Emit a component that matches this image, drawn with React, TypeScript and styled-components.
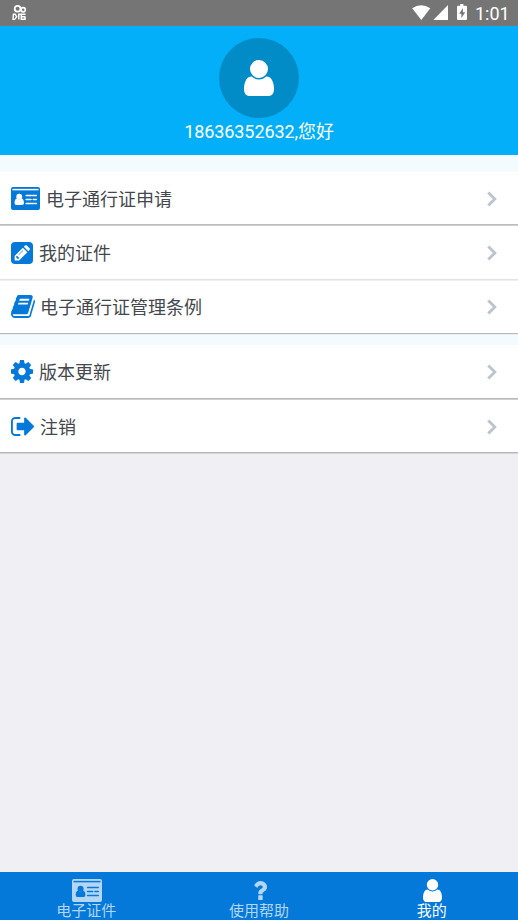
import React from "react";
import styled, { createGlobalStyle } from "styled-components";

const GlobalStyle = createGlobalStyle`
  * { box-sizing: border-box; }
  body { margin: 0; background: #efeff4; font-family: Roboto, "Noto Sans CJK SC", sans-serif; }
`;

const Screen = styled.div`
  display: flex;
  flex-direction: column;
  width: 518px;
  height: 920px;
  overflow: hidden;
  background: #efeff4;
`;

const StatusBar = styled.div`
  display: flex;
  flex: none;
  height: 26px;
  padding: 0 8px 0 12px;
  justify-content: space-between;
  background: #757575;
  color: #fff;
`;

const StatusIcons = styled.div`
  display: flex;
  align-items: flex-start;
`;

const Clock = styled.span`
  margin-left: 7px;
  width: 35px;
  font-size: 18px;
  line-height: 27px;
  white-space: nowrap;
`;

const Profile = styled.header`
  display: flex;
  flex: none;
  flex-direction: column;
  align-items: center;
  height: 129px;
  padding-top: 12px;
  background: #02aff8;
  color: #fff;
`;

const Avatar = styled.div`
  display: flex;
  justify-content: center;
  width: 80px;
  height: 80px;
  padding-top: 22px;
  border-radius: 50%;
  background: #028cc7;
`;

const Greeting = styled.div`
  font-size: 18px;
  line-height: 28px;
  letter-spacing: -0.08px;
  white-space: nowrap;
`;

const Band = styled.div<{ $h: number }>`
  flex: none;
  height: ${(p) => p.$h}px;
  background: #f3fbff;
`;

const Row = styled.div<{ $h: number; $lift: number; $line: string; $edge: string }>`
  display: flex;
  flex: none;
  align-items: center;
  height: ${(p) => p.$h}px;
  padding: 0 20px ${(p) => p.$lift}px 11px;
  background: #fff;
  color: #44484e;
  border-bottom: 1px solid ${(p) => p.$edge};
  box-shadow: inset 0 -1px 0 ${(p) => p.$line};
`;

const RowIcon = styled.span<{ $gap: number }>`
  display: flex;
  margin-right: ${(p) => p.$gap}px;
  color: #0479d9;
`;

const RowLabel = styled.span`
  flex: 1;
  padding-top: 2px;
  font-size: 18px;
  line-height: 26px;
`;

const Spacer = styled.div`
  flex: 1;
`;

const TabBar = styled.nav`
  display: grid;
  flex: none;
  grid-template-columns: repeat(3, 1fr);
  height: 48px;
  background: #0479d9;
`;

const Tab = styled.div<{ $active?: boolean }>`
  display: flex;
  flex-direction: column;
  align-items: center;
  padding-top: 7px;
  color: ${(p) => (p.$active ? "#fff" : "#b3d6f4")};
`;

const TabIcon = styled.span`
  display: flex;
  align-items: center;
  height: 23px;
  padding-left: 2px;
`;

const TabLabel = styled.span`
  font-size: 15px;
  line-height: 18px;
  white-space: nowrap;
`;

type GlyphProps = { d: string; box: string; w: number; h: number };
const Glyph = ({ d, box, w, h }: GlyphProps) => (
  <svg width={w} height={h} viewBox={box} preserveAspectRatio="none" fill="currentColor">
    <path d={d} />
  </svg>
);

const USER =
  "M1536 1399q0 109-62.5 187t-150.5 78h-854q-88 0-150.5-78t-62.5-187q0-85 8.5-160.5t31.5-152 58.5-131 94-89 134.5-34.5q131 128 313 128t313-128q76 0 134.5 34.5t94 89 58.5 131 31.5 152 8.5 160.5zm-256-887q0 159-112.5 271.5t-271.5 112.5-271.5-112.5-112.5-271.5 112.5-271.5 271.5-112.5 271.5 112.5 112.5 271.5z";
const BOOK =
  "M1703 478q40 57 18 129l-275 906q-19 64-76.5 107.5t-122.5 43.5h-923q-77 0-148.5-53.5t-99.5-131.5q-24-67-2-127 0-4 3-27t4-37q1-8-3-21.5t-3-19.5q2-11 8-21t16.5-23.5 16.5-23.5q23-38 45-91.5t30-91.5q3-10 .5-30t-.5-28q3-11 17-28t17-23q21-36 42-92t25-90q1-9-2.5-32t.5-28q4-13 22-30.5t22-22.5q19-26 42.5-84.5t27.5-96.5q1-8-3-25.5t-2-26.5q2-8 9-18t18-23 17-21q8-12 16.5-30.5t15-35 16-36 19.5-32 26.5-23.5 36-11.5 47.5 5.5l-1 3q38-9 51-9h761q74 0 114 56t18 130l-274 906q-36 119-71.5 153.5t-128.5 34.5h-869q-27 0-38 15-11 16-1 43 24 70 144 70h923q29 0 56-15.5t35-41.5l300-987q7-22 5-57 38 15 59 43zm-1064 2q-4 13 2 22.5t20 9.5h608q13 0 25.5-9.5t16.5-22.5l21-64q4-13-2-22.5t-20-9.5h-608q-13 0-25.5 9.5t-16.5 22.5zm-83 256q-4 13 2 22.5t20 9.5h608q13 0 25.5-9.5t16.5-22.5l21-64q4-13-2-22.5t-20-9.5h-608q-13 0-25.5 9.5t-16.5 22.5z";
const COG =
  "M1152 896q0-106-75-181t-181-75-181 75-75 181 75 181 181 75 181-75 75-181zm512-109v222q0 12-8 23t-20 13l-185 28q-19 54-39 91 35 50 107 138 10 12 10 25t-9 23q-27 37-99 108t-94 71q-12 0-26-9l-138-108q-44 23-91 38-16 136-29 186-7 28-36 28h-222q-14 0-24.5-8.5t-11.5-21.5l-28-184q-49-16-90-37l-141 107q-10 9-25 9-14 0-25-11-126-114-165-168-7-10-7-23 0-12 8-23 15-21 51-66.5t54-70.5q-27-50-41-99l-183-27q-13-2-21-12.5t-8-23.5v-222q0-12 8-23t19-13l186-28q14-46 39-92-40-57-107-138-10-12-10-24 0-10 9-23 26-36 98.5-107.5t94.5-71.5q13 0 26 10l138 107q44-23 91-38 16-136 29-186 7-28 36-28h222q14 0 24.5 8.5t11.5 21.5l28 184q49 16 90 37l142-107q9-9 24-9 13 0 25 10 129 119 165 170 7 8 7 22 0 12-8 23-15 21-51 66.5t-54 70.5q26 50 41 98l183 28q13 2 21 12.5t8 23.5z";
const SIGN_OUT =
  "M704 1440q0 4 1 20t.5 26.5-3 23.5-10 19.5-20.5 6.5h-320q-119 0-203.5-84.5t-84.5-203.5v-704q0-119 84.5-203.5t203.5-84.5h320q13 0 22.5 9.5t9.5 22.5q0 4 1 20t.5 26.5-3 23.5-10 19.5-20.5 6.5h-320q-66 0-113 47t-47 113v704q0 66 47 113t113 47h312l11.5 1 11.5 3 8 5.5 7 9 2 13.5zm928-544q0 26-19 45l-544 544q-19 19-45 19t-45-19-19-45v-288h-448q-26 0-45-19t-19-45v-384q0-26 19-45t45-19h448v-288q0-26 19-45t45-19 45 19l544 544q19 19 19 45z";
const QUESTION =
  "M1088 1256v240q0 16-12 28t-28 12h-240q-16 0-28-12t-12-28v-240q0-16 12-28t28-12h240q16 0 28 12t12 28zm316-600q0 54-15.5 101t-35 76.5-55 59.5-57.5 43.5-61 35.5q-41 23-68.5 65t-27.5 67q0 17-12 32.5t-28 15.5h-240q-15 0-25.5-18.5t-10.5-37.5v-45q0-83 65-156.500t143-108.500q59-27 84-56t25-76q0-42-46.500-74t-107.500-32q-65 0-108 29-35 25-107 115-13 16-31 16-12 0-25-8l-164-125q-13-10-15.500-25t5.500-28q160-266 464-266 80 0 161 31t146 83 106 127.500 41 158.500z";

const IdCard = ({ ink, w }: { ink: string; w: number }) => (
  <svg width={w} height="23" viewBox="0 0 29.5 23" preserveAspectRatio="none">
    <rect width="29.5" height="23" rx="2" fill="currentColor" />
    <path d="M1.5 2.6H28" stroke={ink} strokeWidth="1.5" />
    <circle cx="8.4" cy="9.7" r="3" fill={ink} />
    <path
      d="M5.9 11.4C4.4 11.8 3.6 13.6 3.6 16q0 2 1.800 2h6q1.800 0 1.800-2c0-2.400-.8-4.200-2.300-4.600q-2.500 2-5 0z"
      fill={ink}
    />
    <path
      d="M15.400 8.500H25.800M15.400 12.500h5M22.600 12.500H25.800M15.400 16.500H25.800"
      stroke={ink}
      strokeWidth="1.500"
      strokeLinecap="round"
    />
  </svg>
);

const PencilSquare = () => (
  <svg width="22" height="22" viewBox="0 0 22 22">
    <rect width="22" height="22" rx="4" fill="currentColor" />
    <path d="M3.600 18.400v-4.500l8.300-8.200 4.500 4.500-8.300 8.200z" fill="#fff" />
    <path d="M12.800 4.800l1.200-1.200q.9-.8 1.800 0l2.700 2.700q.8.9 0 1.800l-1.200 1.200z" fill="#fff" />
    <path d="M5 14.800v.9h1.300v1.300h.9l1-1-2.200-2.200z" fill="currentColor" />
    <path d="M7.600 12.900l4.400-4.400" stroke="currentColor" strokeWidth=".7" />
  </svg>
);

const Chevron = () => (
  <svg width="12" height="16" viewBox="0 0 12 16" fill="none">
    <path d="M2.300 1.400L8.800 8l-6.500 6.600" stroke="#bcc4cd" strokeWidth="2.900" />
  </svg>
);

const AppBadge = () => (
  <svg width="15" height="21" viewBox="0 0 15 21" fill="none" stroke="#fff">
    <circle cx="5.600" cy="8.700" r="2.900" strokeWidth="1.800" />
    <circle cx="11.200" cy="9.800" r="2.100" strokeWidth="1.700" />
    <path d="M1.400 14.200h1.800l1.500 2.600-2 2.600H1z" strokeWidth="1.400" />
    <path d="M6.800 13.500v6M6.800 14.200h6.700M9.500 16.700h4M13 16.700v2.500H9.300V14" strokeWidth="1.500" />
  </svg>
);

const SystemIcons = () => (
  <svg width="56" height="22" viewBox="0 0 56 22" fill="#fff">
    <path d="M.2 8.300Q9 2 18.300 8.300L9.300 20z" />
    <path d="M21.300 20L36 5v15z" />
    <path d="M48.200 4h3.200v1.800H54q1 0 1 1V19q0 1-1 1h-8q-1 0-1-1V6.800q0-1 1-1h2.200z" />
    <path d="M51 8l-3.900 5.700h2.300V18l3.800-5.700h-2.300z" fill="#757575" />
  </svg>
);

const rows1 = [
  { label: "电子通行证申请", gap: 6, h: 54, lift: 0, line: "#bdbdbd", edge: "#cfcfcf", icon: <IdCard ink="#fff" w={29} /> },
  { label: "我的证件", gap: 6, h: 55, lift: 0, line: "#e3e3e3", edge: "#f0f0f0", icon: <PencilSquare /> },
  { label: "电子通行证管理条例", gap: 5, h: 54, lift: 2, line: "#b8b8ba", edge: "#e9eff2", icon: <Glyph d={BOOK} box="64 128 1664 1536" w={24} h={23} /> },
];
const rows2 = [
  { label: "版本更新", gap: 6, h: 55, lift: 1, line: "#b9b9b9", edge: "#d0d0d0", icon: <Glyph d={COG} box="128 128 1536 1536" w={22} h={23} /> },
  { label: "注销", gap: 6, h: 54, lift: 0, line: "#b8b8b8", edge: "#d4d4d6", icon: <Glyph d={SIGN_OUT} box="64 256 1568 1280" w={23} h={19} /> },
];

const MenuRows = ({ items }: { items: typeof rows1 }) => (
  <>
    {items.map((r) => (
      <Row key={r.label} $h={r.h} $lift={r.lift} $line={r.line} $edge={r.edge}>
        <RowIcon $gap={r.gap}>{r.icon}</RowIcon>
        <RowLabel>{r.label}</RowLabel>
        <Chevron />
      </Row>
    ))}
  </>
);

export default function App() {
  return (
    <Screen>
      <GlobalStyle />
      <StatusBar>
        <AppBadge />
        <StatusIcons>
          <SystemIcons />
          <Clock>1:01</Clock>
        </StatusIcons>
      </StatusBar>
      <Profile>
        <Avatar>
          <Glyph d={USER} box="256 128 1280 1536" w={30} h={36} />
        </Avatar>
        <Greeting>18636352632,您好</Greeting>
      </Profile>
      <Band $h={17} />
      <MenuRows items={rows1} />
      <Band $h={10} />
      <MenuRows items={rows2} />
      <Spacer />
      <TabBar>
        <Tab>
          <TabIcon>
            <IdCard ink="#0479d9" w={30} />
          </TabIcon>
          <TabLabel>电子证件</TabLabel>
        </Tab>
        <Tab>
          <TabIcon>
            <Glyph d={QUESTION} box="384 256 1020 1280" w={14} h={19} />
          </TabIcon>
          <TabLabel>使用帮助</TabLabel>
        </Tab>
        <Tab $active>
          <TabIcon>
            <Glyph d={USER} box="256 128 1280 1536" w={19} h={23} />
          </TabIcon>
          <TabLabel>我的</TabLabel>
        </Tab>
      </TabBar>
    </Screen>
  );
}
